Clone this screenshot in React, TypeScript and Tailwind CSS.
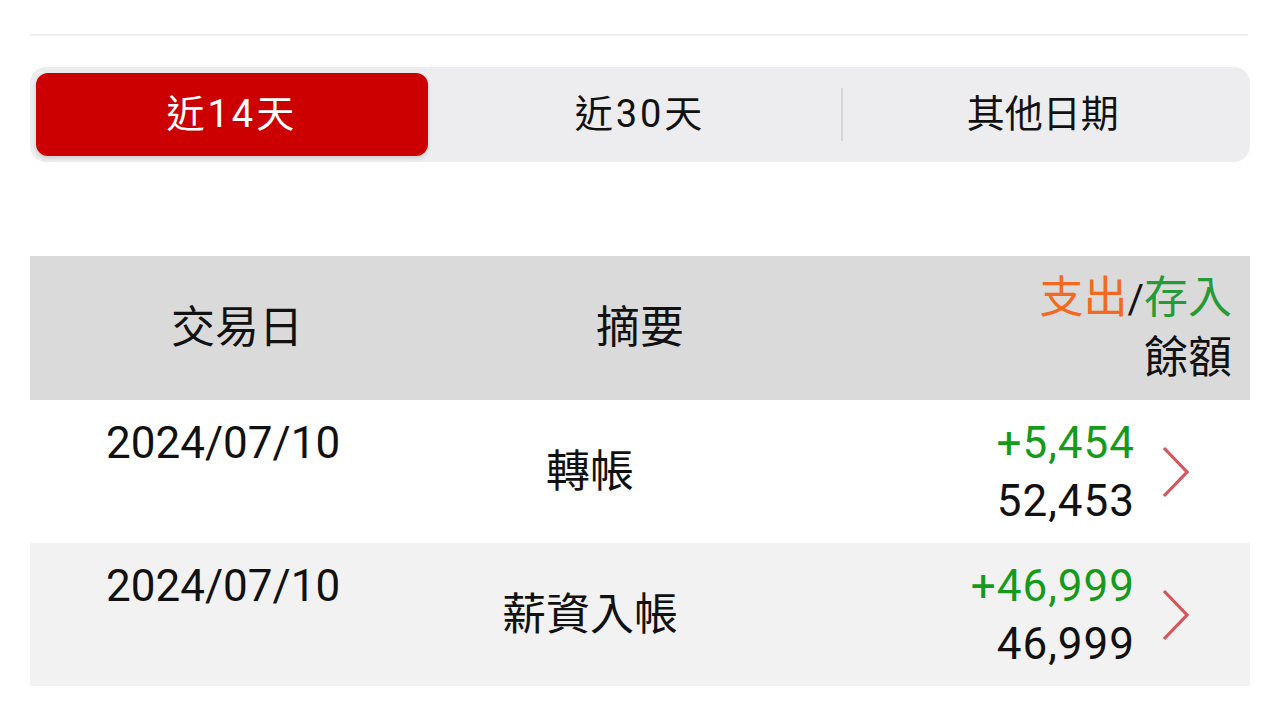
import React from 'react';

const FONT = '"Roboto", "Noto Sans CJK TC", sans-serif';

interface Txn {
  date: string;
  memo: string;
  amount: string;
  balance: string;
}

const txns: Txn[] = [
  { date: '2024/07/10', memo: '轉帳', amount: '+5,454', balance: '52,453' },
  { date: '2024/07/10', memo: '薪資入帳', amount: '+46,999', balance: '46,999' },
];

const ranges = ['近14天', '近30天', '其他日期'];

const Chevron: React.FC = () => (
  <svg width="30" height="52" viewBox="0 0 30 52" fill="none">
    <polyline points="3,2 26,26 3,50" stroke="#d8545b" strokeWidth="3.2" strokeLinejoin="miter" />
  </svg>
);

const RangeTabs: React.FC<{ active: number }> = ({ active }) => (
  <div className="h-[95px] rounded-[16px] bg-[#ededf0] p-[6px] grid grid-cols-3">
    {ranges.map((label, i) => (
      <div key={label} className="relative flex items-center justify-center">
        {i === active ? (
          <div className="absolute inset-y-0 left-0 right-[11px] rounded-[12px] bg-[#cc0000] shadow-[0_2px_4px_rgba(0,0,0,0.15)]" />
        ) : null}
        {i === 2 ? <div className="absolute left-0 top-[15px] bottom-[15px] w-[2px] bg-[#d4d4d6]" /> : null}
        <span
          className={`relative text-[38px] ${i === 2 ? '' : 'tracking-[3px]'} ${
            i === active ? 'text-white pr-[11px]' : 'text-[#111111]'
          }`}
        >
          {label}
        </span>
      </div>
    ))}
  </div>
);

const App: React.FC = () => {
  return (
    <div className="w-[1280px] h-[720px] bg-white px-[30px] overflow-hidden" style={{ fontFamily: FONT }}>
      <div className="mt-[34px] h-[2px] bg-[#eeeeee] mr-[2px]" />

      <div className="mt-[31px]">
        <RangeTabs active={0} />
      </div>

      {/* header */}
      <div className="mt-[94px] h-[144px] bg-[#dadada] flex items-center text-[#111111] text-[44px]">
        <div className="w-[414px] text-center">交易日</div>
        <div className="w-[392px] text-center">摘要</div>
        <div className="flex-1 flex flex-col items-end pr-[18px] leading-[59px]">
          <div>
            <span className="text-[#f26a1f]">支出</span>
            <span className="text-[40px]">/</span>
            <span className="text-[#259a37]">存入</span>
          </div>
          <div>餘額</div>
        </div>
      </div>

      {/* rows */}
      {txns.map((t, i) => (
        <div
          key={i}
          className={`h-[143px] flex ${i % 2 === 1 ? 'bg-[#f2f2f2]' : 'bg-white'} text-[#111111]`}
        >
          <div className="w-[400px] pl-[76px] pt-[14px] text-[44px] leading-[58px]">{t.date}</div>
          <div className="w-[320px] flex items-center justify-center text-[44px]">{t.memo}</div>
          <div className="flex-1 flex items-center justify-end pr-[59px]">
            <div className="self-start pt-[14px] text-right text-[44px] tracking-[1px] leading-[58px]">
              <div className="text-[#169a1c]">{t.amount}</div>
              <div>{t.balance}</div>
            </div>
            <div className="ml-[26px]">
              <Chevron />
            </div>
          </div>
        </div>
      ))}
    </div>
  );
};

export default App;
